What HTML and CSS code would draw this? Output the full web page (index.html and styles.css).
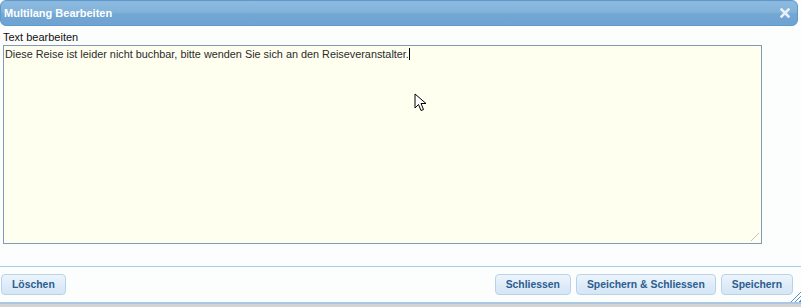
FILE: index.html
```html
<!DOCTYPE html>
<html lang="de">
<head>
    <meta charset="UTF-8">
    <title>Multilang Bearbeiten</title>
    <link rel="stylesheet" href="styles.css">
</head>
<body>
    <div class="dialog">
        <div class="titlebar">
            <span class="title">Multilang Bearbeiten</span>
            <svg class="close" width="10" height="10" viewBox="0 0 10 10">
                <path d="M1.5 1.5 L8.5 8.5 M8.5 1.5 L1.5 8.5" stroke="#e9eff6" stroke-width="2.6" stroke-linecap="square"/>
            </svg>
        </div>
        <div class="content">
            <label for="text">Text bearbeiten</label>
            <div class="area">
                <div class="text" id="text">Diese Reise ist leider nicht buchbar, bitte wenden Sie sich an den Reiseveranstalter.<span class="caret"></span></div>
                <span class="grip"></span>
                <svg class="cursor" width="14" height="20" viewBox="0 0 14 20">
                    <path d="M1 1 L1 15 L4.5 11.5 L7 17.5 L9.5 16.5 L7 10.5 L12 10.5 Z" fill="#fff" stroke="#000" stroke-width="1"/>
                </svg>
            </div>
        </div>
        <div class="footer">
            <button>Löschen</button>
            <div class="spacer"></div>
            <button>Schliessen</button>
            <button>Speichern &amp; Schliessen</button>
            <button>Speichern</button>
            <span class="resize"></span>
        </div>
        <div class="below"></div>
    </div>
</body>
</html>
```
FILE: styles.css
```css
body {
    margin: 0;
    font-family: "Liberation Sans", Arial, sans-serif;
    background: #d9d9d9;
}

.dialog {
    width: 801px;
    height: 307px;
    background: #fcfdfd;
    display: flex;
    flex-direction: column;
    position: relative;
}

.titlebar {
    height: 24px;
    margin: 0 3px 0 0;
    border: 1px solid #5f98cc;
    border-radius: 6px;
    background: linear-gradient(to bottom, #8cbadf 0%, #84b3da 45%, #72a6d3 55%, #6ea3d2 100%);
    display: flex;
    align-items: center;
    padding: 0 7px 0 3px;
}

.title {
    flex: 1;
    color: #fff;
    font-weight: bold;
    font-size: 11px;
}

.close {
    display: block;
}

.content {
    padding: 5px 0 0 3px;
    display: flex;
    flex-direction: column;
}

label {
    font-size: 11px;
    color: #111;
    height: 13px;
    line-height: 13px;
}

.area {
    margin-top: 1px;
    width: 757px;
    height: 197px;
    border: 1px solid #7f9bb8;
    background: #fffff0;
    position: relative;
}

.text {
    font-size: 10.85px;
    color: #2b2b2b;
    padding: 2px 2px 2px 1px;
    line-height: 13px;
}

.caret {
    display: inline-block;
    width: 1px;
    height: 12px;
    background: #000;
    vertical-align: -2px;
}

.grip {
    position: absolute;
    right: 2px;
    bottom: 2px;
    width: 8px;
    height: 8px;
    background:
        linear-gradient(135deg, transparent 45%, #b5b5a8 45%, #b5b5a8 55%, transparent 55%);
    opacity: 0.8;
}

.cursor {
    position: absolute;
    left: 410px;
    top: 47px;
}

.footer {
    margin-top: 22px;
    border-top: 1px solid #acc9e4;
    border-bottom: 2px solid #a9c8e6;
    height: 35px;
    display: flex;
    align-items: center;
    padding: 0 8px 0 1px;
    gap: 5px;
    position: relative;
}

.spacer {
    flex: 1;
}

button {
    font-family: "Liberation Sans", Arial, sans-serif;
    font-size: 10.4px;
    font-weight: bold;
    color: #2c5d8f;
    height: 21px;
    padding: 0 10px;
    border: 1px solid #b9d2ea;
    border-radius: 4px;
    background: linear-gradient(to bottom, #edf5fc 0%, #dfecf8 50%, #d5e6f6 100%);
}

.resize {
    position: absolute;
    right: 0;
    bottom: 0;
    width: 11px;
    height: 11px;
    background: repeating-linear-gradient(135deg, transparent 0 2px, #5b8fc4 2px 3px);
    clip-path: polygon(100% 0, 100% 100%, 0 100%);
}

.below {
    flex: 1;
    background: #d4d4d4;
}
```
